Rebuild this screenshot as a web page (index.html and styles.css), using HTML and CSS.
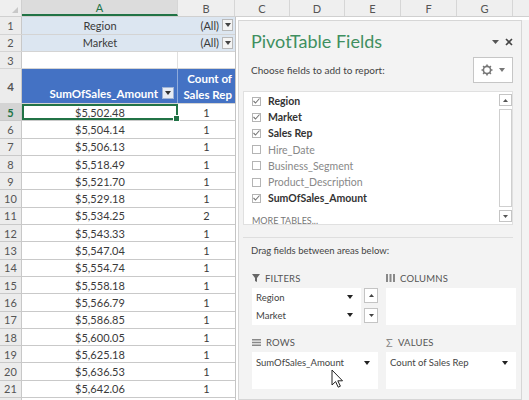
FILE: index.html
```html
<!DOCTYPE html>
<html>
<head>
    <title>PivotTable Fields</title>
    <link rel="stylesheet" href="styles.css">
</head>
<body>
<div class="window">
    <div class="colheads">
        <div class="corner"><span class="corner-tri"></span></div>
        <div class="ch ch-a active">A</div>
        <div class="ch ch-b">B</div>
        <div class="ch ch-c">C</div>
        <div class="ch ch-d">D</div>
        <div class="ch ch-e">E</div>
        <div class="ch ch-f">F</div>
        <div class="ch ch-g">G</div>
        <div class="ch ch-h"></div>
    </div>

    <div class="main">
        <div class="sheet">
            <div class="row r-filter">
                <div class="rn">1</div>
                <div class="filt">
                    <span class="fname">Region</span>
                    <span class="fval">(All)</span>
                    <span class="ddbtn"><svg width="6" height="4" viewBox="0 0 6 4"><path d="M0 0h6L3 4z" fill="#444"/></svg></span>
                </div>
            </div>
            <div class="row r-filter">
                <div class="rn">2</div>
                <div class="filt">
                    <span class="fname">Market</span>
                    <span class="fval">(All)</span>
                    <span class="ddbtn"><svg width="6" height="4" viewBox="0 0 6 4"><path d="M0 0h6L3 4z" fill="#444"/></svg></span>
                </div>
            </div>
            <div class="row r-blank">
                <div class="rn">3</div>
                <div class="ca"></div>
                <div class="cb"></div>
            </div>
            <div class="row r-head">
                <div class="rn">4</div>
                <div class="ha">
                    <span>SumOfSales_Amount</span>
                    <span class="hbtn"><svg width="6" height="4" viewBox="0 0 6 4"><path d="M0 0h6L3 4z" fill="#333"/></svg></span>
                </div>
                <div class="hb">Count of<br>Sales Rep</div>
            </div>
            <div id="rows"></div>
        </div>
        <div class="gapcol"></div>

        <div class="pane">
            <div class="pane-head">
                <div class="pane-title">PivotTable Fields</div>
                <div class="pane-ctrls">
                    <svg width="7" height="4" viewBox="0 0 7 4"><path d="M0 0h7L3.5 4z" fill="#555"/></svg>
                    <svg width="8" height="8" viewBox="0 0 8 8"><path d="M1 1l6 6M7 1L1 7" stroke="#444" stroke-width="1.6"/></svg>
                </div>
            </div>
            <div class="choose">
                <span>Choose fields to add to report:</span>
                <span class="gear-btn">
                    <svg width="12" height="12" viewBox="0 0 12 12">
                        <circle cx="6" cy="6" r="3.6" fill="none" stroke="#777" stroke-width="1.6"/>
                        <path d="M6 0.5v2M6 9.5v2M0.5 6h2M9.5 6h2M2.1 2.1l1.4 1.4M8.5 8.5l1.4 1.4M2.1 9.9l1.4-1.4M8.5 3.5l1.4-1.4" stroke="#777" stroke-width="1.6"/>
                    </svg>
                    <svg width="6" height="4" viewBox="0 0 6 4"><path d="M0 0h6L3 4z" fill="#777"/></svg>
                </span>
            </div>

            <div class="fieldlist">
                <div class="fields" id="fields"></div>
                <div class="more">MORE TABLES...</div>
                <div class="vscroll">
                    <span class="sbtn"><svg width="5" height="3" viewBox="0 0 5 3"><path d="M0 3h5L2.5 0z" fill="#555"/></svg></span>
                    <span class="sthumb"></span>
                    <span class="sbtn"><svg width="5" height="3" viewBox="0 0 5 3"><path d="M0 0h5L2.5 3z" fill="#555"/></svg></span>
                </div>
            </div>

            <div class="drag-note">Drag fields between areas below:</div>

            <div class="areas">
                <div class="area">
                    <div class="area-title">
                        <svg width="8" height="8" viewBox="0 0 8 8"><path d="M0 0h8L5 4v4L3 7V4z" fill="#666"/></svg>
                        FILTERS
                    </div>
                    <div class="filter-wrap">
                        <div class="abox filters">
                            <div class="aitem">Region<svg width="6" height="4" viewBox="0 0 6 4"><path d="M0 0h6L3 4z" fill="#222"/></svg></div>
                            <div class="aitem">Market<svg width="6" height="4" viewBox="0 0 6 4"><path d="M0 0h6L3 4z" fill="#222"/></svg></div>
                        </div>
                        <div class="spin">
                            <span class="sbtn"><svg width="5" height="3" viewBox="0 0 5 3"><path d="M0 3h5L2.5 0z" fill="#444"/></svg></span>
                            <span class="sbtn"><svg width="5" height="3" viewBox="0 0 5 3"><path d="M0 0h5L2.5 3z" fill="#444"/></svg></span>
                        </div>
                    </div>
                </div>
                <div class="area">
                    <div class="area-title">
                        <svg width="9" height="8" viewBox="0 0 9 8"><path d="M0 0h2v8H0zM3.5 0h2v8h-2zM7 0h2v8H7z" fill="#888"/></svg>
                        COLUMNS
                    </div>
                    <div class="abox"></div>
                </div>
                <div class="area">
                    <div class="area-title">
                        <svg width="9" height="7" viewBox="0 0 9 7"><path d="M0 0h9v1.5H0zM0 2.75h9v1.5H0zM0 5.5h9V7H0z" fill="#888"/></svg>
                        ROWS
                    </div>
                    <div class="abox">
                        <div class="aitem tall">SumOfSales_Amount<svg width="6" height="4" viewBox="0 0 6 4"><path d="M0 0h6L3 4z" fill="#222"/></svg></div>
                    </div>
                </div>
                <div class="area">
                    <div class="area-title">
                        <span class="sigma">&Sigma;</span>
                        VALUES
                    </div>
                    <div class="abox">
                        <div class="aitem tall">Count of Sales Rep<svg width="6" height="4" viewBox="0 0 6 4"><path d="M0 0h6L3 4z" fill="#222"/></svg></div>
                    </div>
                </div>
            </div>
        </div>
        <div class="rest"></div>
    </div>

    <svg class="cursor" width="12" height="19" viewBox="0 0 12 19">
        <path d="M1 1v15l3.6-3.4 2.6 5.6 2.2-1-2.6-5.4H11.5z" fill="#fff" stroke="#222" stroke-width="1"/>
    </svg>
</div>

<script>
    var amounts = ['$5,502.48', '$5,504.14', '$5,506.13', '$5,518.49', '$5,521.70', '$5,529.18',
        '$5,534.25', '$5,543.33', '$5,547.04', '$5,554.74', '$5,558.18', '$5,566.79',
        '$5,586.85', '$5,600.05', '$5,625.18', '$5,636.53', '$5,642.06'];
    var counts = [1, 1, 1, 1, 1, 1, 2, 1, 1, 1, 1, 1, 1, 1, 1, 1, 1];

    var html = '';
    for (var i = 0; i < amounts.length; i++) {
        var n = i + 5;
        html += '<div class="row r-data' + (i === 0 ? ' cur' : '') + '">' +
            '<div class="rn">' + n + '</div>' +
            '<div class="ca' + (i === 0 ? ' sel' : '') + '">' + amounts[i] + '</div>' +
            '<div class="cb">' + counts[i] + '</div></div>';
    }
    // partly visible row below 21
    html += '<div class="row r-data"><div class="rn"></div><div class="ca"></div><div class="cb"></div></div>';
    document.getElementById('rows').innerHTML = html;

    var fields = [
        ['Region', true], ['Market', true], ['Sales Rep', true], ['Hire_Date', false],
        ['Business_Segment', false], ['Product_Description', false], ['SumOfSales_Amount', true]
    ];
    var fh = '';
    fields.forEach(function (f) {
        fh += '<div class="field' + (f[1] ? ' on' : '') + '"><span class="cbox">' +
            (f[1] ? '<svg width="7" height="6" viewBox="0 0 7 6"><path d="M0.5 3l2 2L6.5 0.5" fill="none" stroke="#777" stroke-width="1.1"/></svg>' : '') +
            '</span>' + f[0] + '</div>';
    });
    document.getElementById('fields').innerHTML = fh;
</script>
</body>
</html>
```

FILE: styles.css
```css
* { box-sizing: border-box; }
body { margin: 0; }
.window { width: 529px; height: 400px; overflow: hidden; position: relative; background: #fff; font-family: Lato, "Liberation Sans", sans-serif; }

/* column headers */
.colheads { display: flex; height: 17px; background: #efefef; border-bottom: 1px solid #d0d0d0; }
.corner { width: 22px; border-right: 1px solid #d0d0d0; position: relative; }
.corner-tri { position: absolute; right: 3px; bottom: 3px; width: 0; height: 0; border-left: 6px solid transparent; border-bottom: 6px solid #c8c8c8; }
.ch { display: flex; align-items: center; justify-content: center; border-right: 1px solid #d6d6d6; font-size: 11px; color: #555; }
.ch.active { background: #dcdcdc; color: #217346; border-bottom: 2px solid #217346; }
.ch-a { width: 156px; }
.ch-b { width: 57px; }
.ch-c { width: 55px; }
.ch-d { width: 55px; }
.ch-e { width: 56px; }
.ch-f { width: 56px; }
.ch-g { width: 56px; }
.ch-h { flex: 1; border-right: none; }

.main { display: flex; height: 383px; }

/* sheet */
.sheet { width: 236px; border-right: 1px solid #c4c4c4; font-size: 11px; color: #3a3a3a; }
.row { display: flex; height: 17.3px; border-bottom: 1px solid #d4d4d4; }
.rn { width: 22px; flex-shrink: 0; background: #ececec; border-right: 1px solid #c8c8c8; display: flex; align-items: center; justify-content: center; color: #555; }
.ca { width: 156px; display: flex; align-items: center; justify-content: center; border-right: 1px solid #e0e0e0; }
.cb { width: 57px; display: flex; align-items: center; justify-content: center; }
.r-filter { height: 17.5px; }
.r-blank { height: 17px; }
.filt { width: 213px; display: flex; align-items: center; background: #dce6f1; }
.fname { width: 156px; text-align: center; }
.fval { flex: 1; text-align: right; padding-right: 3px; }
.ddbtn { width: 11px; height: 12px; margin-right: 2px; background: #f4f4f4; border: 1px solid #b8b8b8; display: flex; align-items: center; justify-content: center; }

.r-head { height: 35px; background: #4472c4; color: #fff; font-weight: bold; font-size: 11.5px; }
.ha { width: 156px; display: flex; align-items: flex-end; justify-content: flex-end; padding: 0 3px 3px 0; gap: 4px; border-right: 1px solid #8eaadb; }
.hbtn { width: 12px; height: 12px; background: #e8ecf4; border: 1px solid #9fb3d6; display: flex; align-items: center; justify-content: center; margin-bottom: 1px; }
.hb { width: 57px; text-align: right; padding: 2px 3px 0 0; line-height: 16px; }

.r-data { border-bottom-color: #c9c9c9; }
.r-data .ca { border-right: none; }
.r-data.cur .rn { background: #d4d4d4; color: #217346; font-weight: bold; }
.ca.sel { border: 2px solid #217346; position: relative; }
.ca.sel::after { content: ""; position: absolute; right: -4px; bottom: -4px; width: 5px; height: 5px; background: #217346; border: 1px solid #fff; }

.gapcol { width: 2px; }

/* pivot pane */
.pane { width: 284px; margin-top: 3px; background: #f3f3f3; border: 1px solid #d6d6d6; padding: 0 8px 0 4px; font-size: 9.5px; color: #444; }
.pane-head { display: flex; justify-content: space-between; align-items: flex-start; padding: 7px 0 0 8px; }
.pane-title { font-size: 18px; color: #3f8f60; line-height: 26px; }
.pane-ctrls { display: flex; gap: 6px; align-items: center; padding-top: 10px; }
.choose { display: flex; justify-content: space-between; align-items: center; padding-left: 8px; margin-top: 3px; font-size: 10px; }
.gear-btn { width: 40px; height: 26px; background: #fff; border: 1px solid #c6c6c6; display: flex; align-items: center; justify-content: center; gap: 6px; }

.fieldlist { position: relative; height: 134px; margin-top: 8px; background: #fff; border: 1px solid #e0e0e0; padding: 1px 0 0 8px; }
.field { display: flex; align-items: center; gap: 7px; height: 16.2px; font-size: 10.5px; color: #888; }
.field.on { color: #333; font-weight: bold; }
.cbox { width: 9px; height: 9px; border: 1px solid #b4b4b4; background: #fff; display: flex; align-items: center; justify-content: center; }
.more { margin-top: 9px; font-size: 9px; color: #777; }
.vscroll { position: absolute; right: 0; top: 2px; bottom: 2px; width: 13px; display: flex; flex-direction: column; gap: 3px; }
.vscroll .sthumb { flex: 1; border: 1px solid #cfcfcf; background: #fff; }
.sbtn { height: 12px; border: 1px solid #c4c4c4; background: #fff; display: flex; align-items: center; justify-content: center; }

.drag-note { border-top: 1px solid #dedede; margin-top: 12px; padding: 7px 0 0 8px; }

.areas { display: grid; grid-template-columns: 126px 130px; column-gap: 8px; row-gap: 10px; padding: 15px 0 0 9px; }
.area-title { display: flex; align-items: center; gap: 5px; height: 14px; font-size: 9.5px; color: #555; letter-spacing: 0.2px; }
.sigma { font-size: 11px; color: #888; }
.abox { height: 37px; margin-top: 3px; background: #fff; }
.aitem { display: flex; align-items: center; justify-content: space-between; height: 18px; padding: 0 8px 0 4px; font-size: 9.5px; color: #444; }
.aitem.tall { height: 21px; }
.filter-wrap { display: flex; gap: 3px; }
.filter-wrap .abox { flex: 1; }
.abox.filters .aitem { padding-right: 8px; }
.spin { display: flex; flex-direction: column; justify-content: space-between; width: 14px; height: 35px; margin-top: 3px; }
.spin .sbtn { height: 15px; }

.rest { flex: 1; background: #f3f3f3; margin-top: 3px; }

.cursor { position: absolute; left: 331px; top: 369px; }
```
